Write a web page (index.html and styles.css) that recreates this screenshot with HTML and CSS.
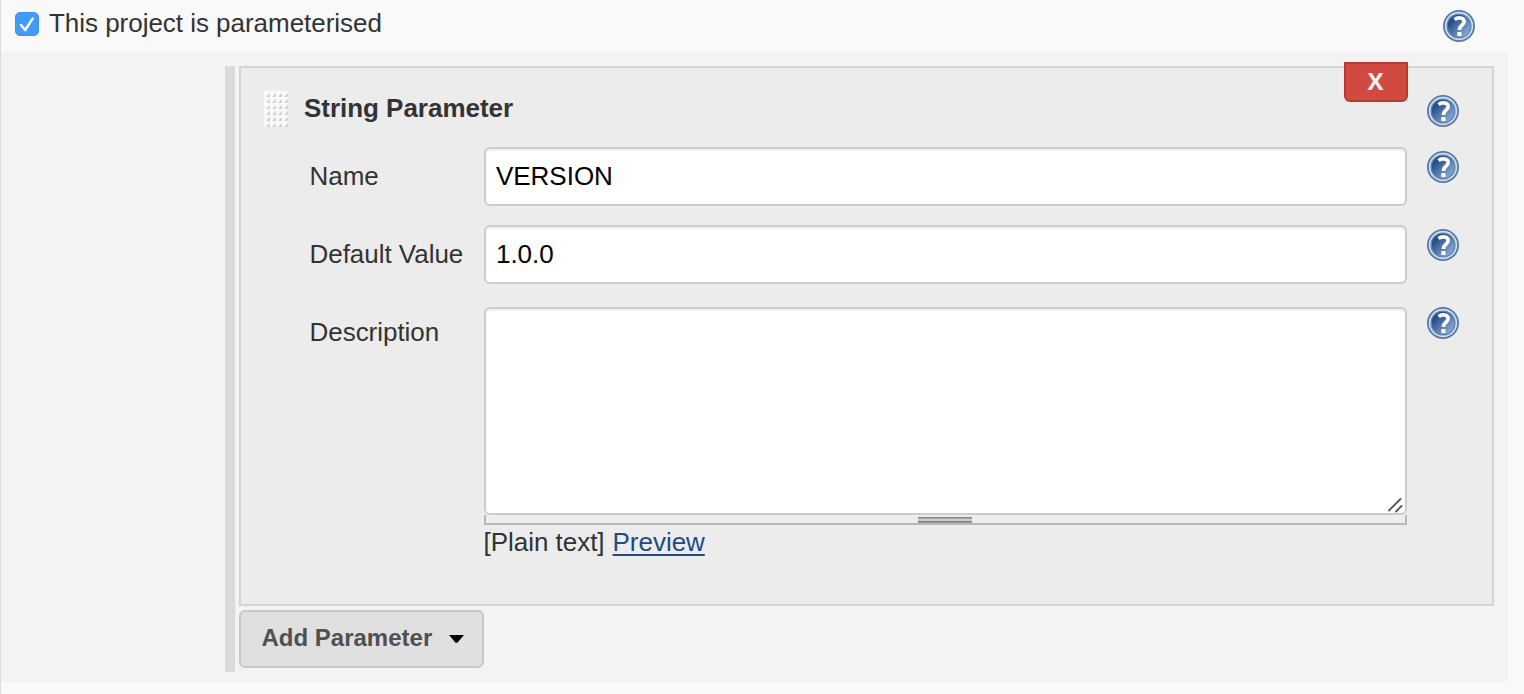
FILE: index.html
```
<!DOCTYPE html>
<html lang="en">
<head>
<meta charset="utf-8">
<title>Project configuration</title>
<link rel="stylesheet" href="styles.css">
</head>
<body>
<svg class="defs" width="0" height="0">
  <defs>
    <linearGradient id="disc" x1="0.1" y1="0.1" x2="0.9" y2="0.9">
      <stop offset="0.15" stop-color="#234b87"/>
      <stop offset="1" stop-color="#8fb2dc"/>
    </linearGradient>
    <linearGradient id="dot" x1="0" y1="0" x2="1" y2="1">
      <stop offset="0.35" stop-color="#f4f4f2"/>
      <stop offset="1" stop-color="#adada6"/>
    </linearGradient>
    <symbol id="help" viewBox="0 0 32 32">
      <circle cx="16" cy="16" r="15.1" fill="#d5dfec" stroke="#5579ab" stroke-width="1.8"/>
      <circle cx="16" cy="16" r="11.9" fill="url(#disc)" stroke="#6485b3" stroke-width="1.4"/>
      <path d="M11.6 9.6C14.2 7.1 21.2 7.2 21.2 11.6C21.2 15.2 16.4 15.2 16.4 19.9" fill="none" stroke="#fff" stroke-width="3.7"/>
      <rect x="14.3" y="22" width="4.3" height="4" rx="0.8" fill="#fff"/>
    </symbol>
    <pattern id="dots" width="6" height="6" patternUnits="userSpaceOnUse">
      <path d="M6 2V4.6Q6 6 4.6 6H2Q2 4.6 3 3.4Q4.4 2 6 2Z" fill="url(#dot)"/>
    </pattern>
  </defs>
</svg>
<main class="page">
  <header class="toggle">
    <span class="checkbox"><svg width="24" height="24" viewBox="0 0 24 24"><path d="M6 13L10.2 18L17.8 6.4" fill="none" stroke="#fff" stroke-width="2.4" stroke-linecap="round" stroke-linejoin="round"/></svg></span>
    <span class="toggle-label">This project is parameterised</span>
    <svg class="help"><use href="#help"/></svg>
  </header>
  <section class="block">
    <div class="group">
      <div class="panel">
        <button class="delete">X</button>
        <div class="head">
          <svg class="grip" width="24" height="36"><rect width="24" height="36" fill="#f9f9f8"/><rect width="24" height="36" fill="url(#dots)"/></svg>
          <strong class="title">String Parameter</strong>
          <svg class="help"><use href="#help"/></svg>
        </div>
        <div class="row">
          <label class="label name">Name</label>
          <div class="input version">VERSION</div>
          <svg class="help"><use href="#help"/></svg>
        </div>
        <div class="row">
          <label class="label default">Default Value</label>
          <div class="input number">1.0.0</div>
          <svg class="help"><use href="#help"/></svg>
        </div>
        <div class="row">
          <label class="label description">Description</label>
          <div class="editor">
            <div class="textarea"><svg width="16" height="16" viewBox="0 0 16 16"><path d="M2 13.5L13.5 2M9 14.5L14.5 9" stroke="#555" stroke-width="1.8" stroke-linecap="round"/></svg></div>
            <div class="resizer"><span class="resizer-grip"></span></div>
            <div class="markup"><span class="plain">[Plain text]</span><a class="preview" href="#">Preview</a></div>
          </div>
          <svg class="help"><use href="#help"/></svg>
        </div>
      </div>
      <button class="add"><span class="add-text">Add Parameter</span><svg width="15" height="8" viewBox="0 0 15 8"><path d="M0 0H15L8.4 7.8H6.6Z"/></svg></button>
    </div>
  </section>
</main>
</body>
</html>
```
FILE: styles.css
```
* { box-sizing: border-box; }
body { margin: 0; background: #f9f9f9; color: #333; font: 26px/30px "Liberation Sans", Arial, sans-serif; letter-spacing: -0.03px; }
svg { display: block; }
.defs { position: absolute; }
.page { height: 694px; border-left: 1px solid #ddd; overflow: hidden; }
.toggle { display: flex; align-items: flex-start; height: 52px; padding: 8px 49px 0 14px; }
.checkbox { width: 24px; height: 24px; margin-top: 4px; border-radius: 5px; background: #429bf8; border: 1px solid #3a92f3; }
.checkbox svg { margin: -1px; }
.toggle-label { margin-left: 10px; white-space: nowrap; }
.help { width: 32px; height: 32px; }
.toggle .help { margin: 2px 0 0 auto; }
.block { width: 1507px; height: 630px; padding: 14px 14px 10px 224px; background: #f3f3f3; }
.group { height: 606px; border-left: 10px solid #dadada; padding-left: 4px; }
.panel { position: relative; height: 540px; border: 2px solid #d4d4d4; background: #ececec; padding: 23px 33px 0 23px; }
.delete { position: absolute; top: -6px; right: 84px; width: 64px; height: 40px; padding: 0 1px 2px 0; border: 2px solid #b83a30; border-radius: 0 0 6px 6px; background: #d14a3f; color: #f2efef; font: bold 24px/34px "Open Sans", sans-serif; }
.head { display: flex; height: 56px; }
.title { margin: 2px 0 0 16px; }
.head .help { margin: 4px 0 0 auto; }
.row { display: grid; grid-template-columns: 174px 923px 32px; height: 78px; margin-left: 45.5px; }
.row .help { margin: 4px 0 0 20px; }
.label { margin-top: 14px; white-space: nowrap; }
.input { height: 59px; border: 2px solid #ccc; border-radius: 6px; background: #fff; color: #000; padding: 12px 10.5px; box-shadow: inset 0 2px 2px rgba(0,0,0,.07); }
.editor { padding-top: 4px; }
.textarea { display: flex; justify-content: flex-end; align-items: flex-end; height: 208px; padding: 0 2px 0 0; border: 2px solid #ccc; border-radius: 6px; background: #fff; box-shadow: inset 0 2px 2px rgba(0,0,0,.07); }
.resizer { display: flex; justify-content: center; height: 10px; border: 2px solid #b9b9b1; border-top: 0; background: #eee; }
.resizer-grip { width: 54px; height: 6px; margin-top: 2px; background: linear-gradient(#858580 0 1px, #aaa 1px 2px, #ccc 2px 4px, #858580 4px 5px, #999 5px); }
.markup { display: flex; gap: 8px; margin-top: 2px; white-space: nowrap; }
.preview { color: #204a87; text-decoration-thickness: 1.5px; text-underline-offset: 3px; }
.add { display: flex; align-items: flex-start; width: 245px; height: 58px; margin-top: 4px; padding: 11px 0 0 20.5px; border: 2px solid #c8c8c8; border-radius: 6px; background: #e0e0e0; color: #505050; font: bold 24px/30px "Liberation Sans", Arial, sans-serif; white-space: nowrap; }
.add svg { margin: 12px 0 0 17px; fill: #000; }
```
